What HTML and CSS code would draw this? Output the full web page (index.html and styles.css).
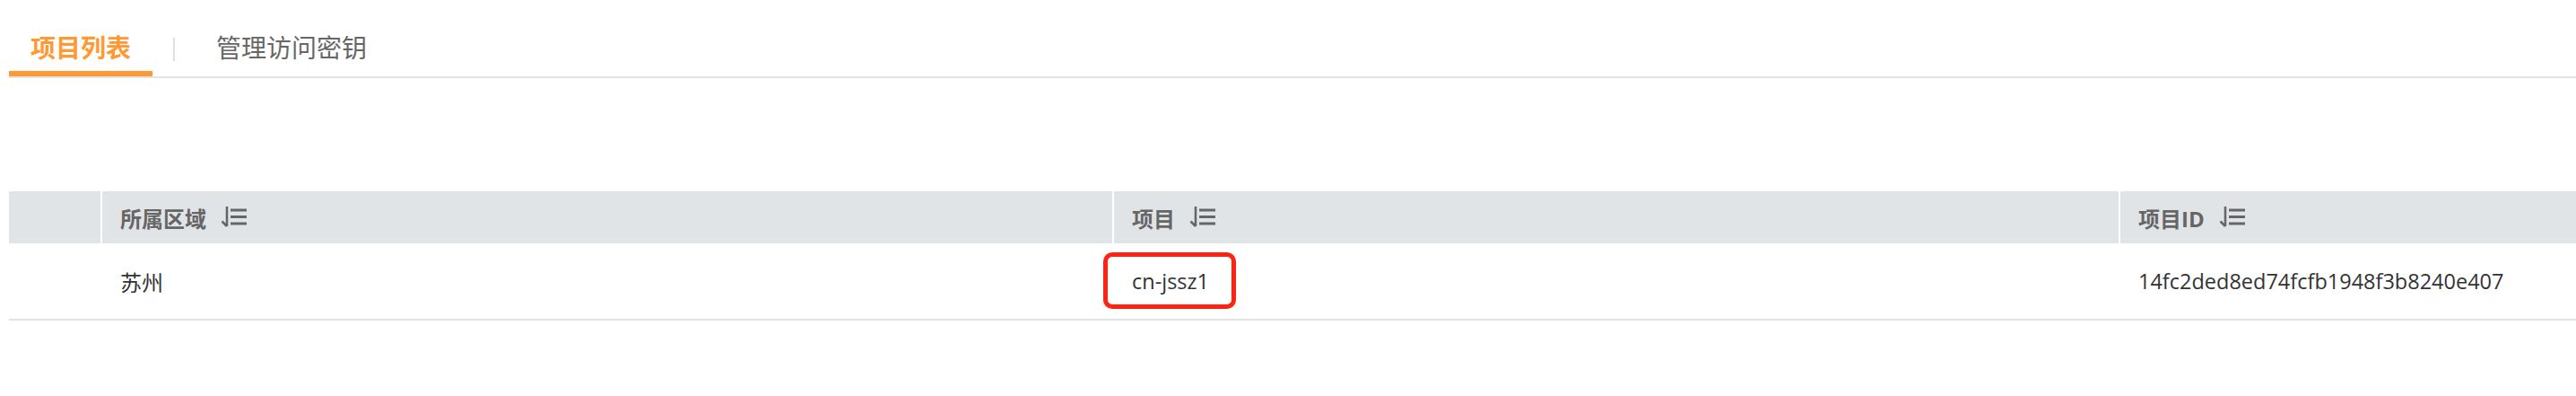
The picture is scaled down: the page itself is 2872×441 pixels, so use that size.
FILE: index.html
```html
<!DOCTYPE html>
<html lang="zh-CN">
<head>
    <meta charset="UTF-8">
    <meta name="viewport" content="width=device-width, initial-scale=1.0">
    <title>项目列表</title>
    <link rel="stylesheet" href="styles.css">
</head>
<body>

    <div class="page">
        <div class="tabs">
            <div class="tab active">项目列表</div>
            <div class="tab-divider"></div>
            <div class="tab">管理访问密钥</div>
        </div>

        <div class="grid">
            <div class="th"></div>
            <div class="th">所属区域
                <svg class="sort" viewBox="0 0 30 24"><path d="M7 0V22M7 22L1.5 16.5"/><path class="bars" d="M11 4H29M11 11.5H29M11 19H29"/></svg>
            </div>
            <div class="th">项目
                <svg class="sort" viewBox="0 0 30 24"><path d="M7 0V22M7 22L1.5 16.5"/><path class="bars" d="M11 4H29M11 11.5H29M11 19H29"/></svg>
            </div>
            <div class="th">项目ID
                <svg class="sort" viewBox="0 0 30 24"><path d="M7 0V22M7 22L1.5 16.5"/><path class="bars" d="M11 4H29M11 11.5H29M11 19H29"/></svg>
            </div>

            <div class="td"></div>
            <div class="td">苏州</div>
            <div class="td"><span class="mark"></span><span class="code">cn-jssz1</span></div>
            <div class="td"><span class="code">14fc2ded8ed74fcfb1948f3b8240e407</span></div>
        </div>
    </div>

</body>
</html>
```

FILE: styles.css
```css
body {
    margin: 0;
    font-family: "Open Sans", "Noto Sans CJK SC", sans-serif;
    background-color: #fff;
    color: #333;
}
.page {
    padding-left: 10px;
}
.tabs {
    display: flex;
    align-items: flex-start;
    border-bottom: 2px solid #e2e2e2;
}
.tab {
    padding: 33px 24px 6px;
    line-height: 40px;
    font-size: 28px;
    color: #666;
    border-bottom: 6px solid transparent;
}
.tab.active {
    color: #ff9933; /* orange active tab */
    font-weight: bold;
    border-bottom-color: #ff9933;
}
.tab-divider {
    width: 2px;
    height: 26px;
    margin: 42px 22px 0 23px;
    background-color: #e0e0e0;
}
.grid {
    display: grid;
    grid-template-columns: 102px 1128px 1122px 1fr;
    margin-top: 126px;
}
.th {
    display: flex;
    align-items: center;
    height: 58px;
    padding-left: 20px;
    background-color: #e1e4e6;
    border-left: 2px solid #fff;
    font-size: 24px;
    font-weight: bold;
    color: #666;
}
.th:first-child {
    border-left: none;
}
.sort {
    width: 30px;
    height: 24px;
    margin-left: 16px;
    fill: none;
    stroke: #666;
    stroke-width: 2.6;
}
.sort .bars {
    stroke-width: 3.2;
}
.td {
    position: relative;
    display: flex;
    align-items: center;
    height: 84px;
    padding-left: 22px;
    border-bottom: 2px solid #e2e2e2;
    font-size: 24px;
    color: #333;
}
.code {
    font-size: 23.5px;
}
.mark {
    position: absolute;
    left: -10px;
    top: 10px;
    width: 148px;
    height: 63px;
    box-sizing: border-box;
    border: 5px solid #ff2213; /* red highlight box */
    border-radius: 10px;
}
```
